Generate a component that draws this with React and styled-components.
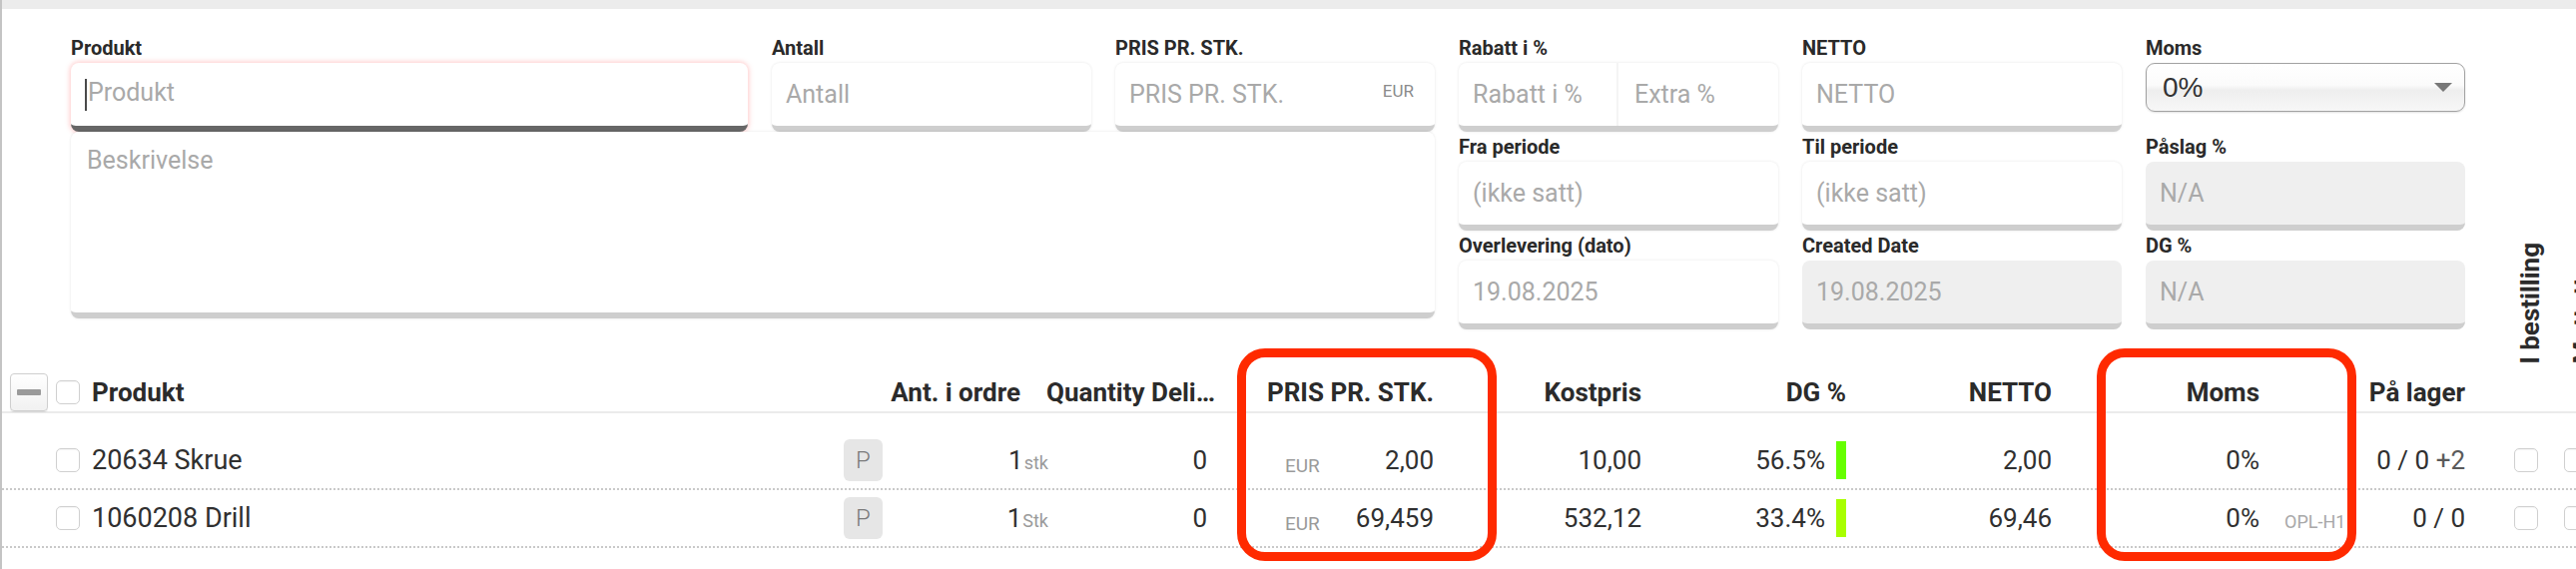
import React from "react";
import styled, { createGlobalStyle } from "styled-components";

const GlobalStyle = createGlobalStyle`
  * { box-sizing: border-box; }
  html, body { margin: 0; padding: 0; background: #fff; }
  body {
    width: 2580px;
    height: 570px;
    overflow: hidden;
    font-family: Roboto, "Liberation Sans", Arial, sans-serif;
    color: #2f2f2f;
  }
`;

const Page = styled.div`
  height: 570px;
  border-left: 2px solid #c4c4c4;
  overflow: hidden;
`;

const TopBar = styled.div`
  height: 9px;
  background: #ececec;
`;

/* ---------- form ---------- */

const FormGrid = styled.div`
  display: grid;
  grid-template-columns: 678px repeat(5, 320px);
  grid-template-rows: repeat(3, 99px);
  column-gap: 24px;
  padding: 24px 0 0 69px;
`;

const Field = styled.div`
  display: flex;
  flex-direction: column;
  grid-column: ${(p) => p.$col};
  grid-row: ${(p) => p.$row};
`;

const Label = styled.label`
  height: 30px;
  line-height: 30px;
  font-size: 20px;
  font-weight: 700;
  color: #2a2a2a;
  white-space: nowrap;
`;

const InputBox = styled.div`
  display: flex;
  align-items: center;
  justify-content: space-between;
  height: 69px;
  padding: 0 21px 0 14px;
  background: ${(p) => (p.$disabled ? "#efefef" : "#fff")};
  border-radius: 8px;
  border-bottom: 6px solid ${(p) => (p.$focused ? "#676767" : "#cecece")};
  box-shadow: ${(p) =>
    p.$focused
      ? "0 0 5px 1px rgba(255, 120, 120, 0.4)"
      : p.$disabled
      ? "none"
      : "0 0 3px rgba(0, 0, 0, 0.1)"};
  font-size: 25px;
  color: #a9a9a9;
  white-space: nowrap;
`;

const DescriptionBox = styled(InputBox)`
  grid-column: 1 / span 3;
  grid-row: 2 / span 2;
  align-items: flex-start;
  height: 187px;
  padding: 14px 16px;
`;

const SplitBox = styled(InputBox)`
  padding: 0;
  justify-content: flex-start;
`;

const SplitHalf = styled.span`
  flex: 1;
  height: 100%;
  display: flex;
  align-items: center;
  padding-left: 14px;

  & + & {
    border-left: 2px solid #f4f4f4;
    padding-left: 16px;
  }
`;

const Suffix = styled.span`
  margin-top: -8px;
  font-size: 17px;
  color: #8b8b8b;
`;

const Caret = styled.span`
  display: inline-block;
  width: 2px;
  height: 32px;
  margin-right: 1px;
  vertical-align: middle;
  background: #4a4a4a;
`;

const Select = styled.div`
  display: flex;
  align-items: center;
  justify-content: space-between;
  height: 49px;
  padding: 0 12px 0 16px;
  border: 1.5px solid #a2a2a2;
  border-radius: 9px;
  background: linear-gradient(
    to bottom,
    #ffffff 0%,
    #fbfbfb 45%,
    #eeeeee 56%,
    #f7f7f7 100%
  );
  box-shadow: 0 1px 2px rgba(0, 0, 0, 0.12);
  font-family: "Liberation Sans", Arial, sans-serif;
  font-size: 28px;
  color: #333;
`;

const SelectArrow = styled.span`
  width: 0;
  height: 0;
  border-left: 9px solid transparent;
  border-right: 9px solid transparent;
  border-top: 9px solid #787878;
`;

/* ---------- table ---------- */

const COLS =
  "46px 36px 753px 39px 138px 198px 216px 208px 205px 206px 208px 206px 79px 92px";

const Table = styled.div`
  position: relative;
  margin-top: 44px;
`;

const HeadRow = styled.div`
  display: grid;
  grid-template-columns: ${COLS};
  grid-template-rows: 38px;
  height: 40px;
  padding-left: 8px;
  border-bottom: 2px solid #ebebeb;
  font-size: 26px;
  font-weight: 700;
  color: #2b2b2b;
`;

const Body = styled.div`
  padding-top: 19px;
`;

const Row = styled.div`
  display: grid;
  grid-template-columns: ${COLS};
  height: 58px;
  padding-left: 8px;
  border-bottom: 2px dotted #c9c9c9;
  font-size: 26px;
  color: #303030;
`;

const justify = {
  left: "flex-start",
  right: "flex-end",
  center: "center",
  between: "space-between",
};

const Cell = styled.div`
  display: flex;
  align-items: center;
  justify-content: ${(p) => justify[p.$align || "right"]};
  gap: ${(p) => p.$gap || 0}px;
  padding-left: ${(p) => p.$pl || 0}px;
  padding-right: ${(p) => p.$pr || 0}px;
  min-width: 0;
  white-space: nowrap;
`;

const ProductName = styled.span`
  font-size: 27px;
`;

const HeadText = styled.span`
  overflow: hidden;
  text-overflow: ellipsis;
  white-space: nowrap;
`;

const VerticalCell = styled.div`
  display: flex;
  flex-direction: column;
  justify-content: flex-end;
  align-items: ${(p) => (p.$align === "left" ? "flex-start" : "flex-end")};
  padding-left: ${(p) => p.$pl || 0}px;
  padding-right: ${(p) => p.$pr || 0}px;
`;

const VerticalText = styled.span`
  writing-mode: vertical-rl;
  transform: rotate(180deg);
  margin-bottom: 47px;
  font-size: 26px;
  font-weight: 700;
  line-height: 26px;
  white-space: nowrap;
`;

const CollapseButton = styled.button`
  display: flex;
  align-items: center;
  justify-content: center;
  width: 38px;
  height: 38px;
  padding: 0;
  border: 1.5px solid #cfcfcf;
  border-radius: 4px;
  background: linear-gradient(to bottom, #ffffff, #f1f1f1);
  box-shadow: 0 1px 1px rgba(0, 0, 0, 0.08);
`;

const MinusBar = styled.span`
  width: 24px;
  height: 6px;
  border-radius: 1px;
  background: #9a9a9a;
`;

const Checkbox = styled.span`
  display: inline-block;
  width: 24px;
  height: 24px;
  border: 1.5px solid #d0d0d0;
  border-radius: 5px;
  background: #fff;
  box-shadow: inset 0 1px 1px rgba(0, 0, 0, 0.04);
`;

const Badge = styled.span`
  display: flex;
  align-items: center;
  justify-content: center;
  width: 39px;
  height: 42px;
  border-radius: 6px;
  background: #e6e6e6;
  color: #7a7a7a;
  font-size: 24px;
  font-weight: 300;
`;

const Unit = styled.span`
  margin-left: 1px;
  margin-right: -28px;
  font-size: 18px;
  color: #9a9a9a;
`;

const Currency = styled.span`
  margin-top: 10px;
  font-size: 19px;
  color: #9a9a9a;
`;

const Bar = styled.span`
  width: 10px;
  height: 38px;
  background: ${(p) => p.$color};
`;

const Code = styled.span`
  display: inline-block;
  width: 58px;
  margin-left: 25px;
  margin-right: -83px;
  overflow: hidden;
  vertical-align: -4px;
  line-height: 1;
  font-size: 18px;
  color: #a8a8a8;
`;

const Extra = styled.span`
  color: #5a5a5a;
`;

const Highlight = styled.div`
  position: absolute;
  top: -25px;
  left: ${(p) => p.$left}px;
  width: 260px;
  height: 213px;
  border: 9px solid #ff2a00;
  border-radius: 28px;
  pointer-events: none;
`;

const rows = [
  {
    name: "20634 Skrue",
    unit: "stk",
    price: "2,00",
    cost: "10,00",
    dg: "56.5%",
    dgColor: "#66ff00",
    netto: "2,00",
    code: null,
    extra: "+2",
  },
  {
    name: "1060208 Drill",
    unit: "Stk",
    price: "69,459",
    cost: "532,12",
    dg: "33.4%",
    dgColor: "#a8ff00",
    netto: "69,46",
    code: "OPL-H1",
    extra: null,
  },
];

const OrderLines = () => (
  <Table>
    <HeadRow>
      <Cell $align="left">
        <CollapseButton>
          <MinusBar />
        </CollapseButton>
      </Cell>
      <Cell $align="left">
        <Checkbox />
      </Cell>
      <Cell $align="left">Produkt</Cell>
      <Cell />
      <Cell>Ant. i ordre</Cell>
      <Cell $pl={26}>
        <HeadText>Quantity Delivered</HeadText>
      </Cell>
      <Cell>PRIS PR. STK.</Cell>
      <Cell>Kostpris</Cell>
      <Cell>DG %</Cell>
      <Cell>NETTO</Cell>
      <Cell>Moms</Cell>
      <Cell>På lager</Cell>
      <VerticalCell $pr={1}>
        <VerticalText>I bestilling</VerticalText>
      </VerticalCell>
      <VerticalCell $align="left" $pl={26}>
        <VerticalText>Mottatt</VerticalText>
      </VerticalCell>
    </HeadRow>
    <Body>
      {rows.map((r) => (
        <Row key={r.name}>
          <Cell />
          <Cell $align="left">
            <Checkbox />
          </Cell>
          <Cell $align="left">
            <ProductName>{r.name}</ProductName>
          </Cell>
          <Cell $align="left">
            <Badge>P</Badge>
          </Cell>
          <Cell>
            <span>
              1<Unit>{r.unit}</Unit>
            </span>
          </Cell>
          <Cell $pr={11}>0</Cell>
          <Cell $align="between" $pl={67}>
            <Currency>EUR</Currency>
            <span>{r.price}</span>
          </Cell>
          <Cell>{r.cost}</Cell>
          <Cell $gap={11}>
            <span>{r.dg}</span>
            <Bar $color={r.dgColor} />
          </Cell>
          <Cell>{r.netto}</Cell>
          <Cell>
            <span>
              0%{r.code && <Code>{r.code}</Code>}
            </span>
          </Cell>
          <Cell>
            <span>
              0 / 0{r.extra && <Extra> {r.extra}</Extra>}
            </span>
          </Cell>
          <Cell $pr={6}>
            <Checkbox />
          </Cell>
          <Cell $align="left" $pl={20}>
            <Checkbox />
          </Cell>
        </Row>
      ))}
    </Body>
    <Highlight $left={1237} />
    <Highlight $left={2098} />
  </Table>
);

const LineForm = () => (
  <FormGrid>
    <Field $col={1} $row={1}>
      <Label>Produkt</Label>
      <InputBox $focused>
        <span>
          <Caret />
          Produkt
        </span>
      </InputBox>
    </Field>
    <Field $col={2} $row={1}>
      <Label>Antall</Label>
      <InputBox>Antall</InputBox>
    </Field>
    <Field $col={3} $row={1}>
      <Label>PRIS PR. STK.</Label>
      <InputBox>
        <span>PRIS PR. STK.</span>
        <Suffix>EUR</Suffix>
      </InputBox>
    </Field>
    <Field $col={4} $row={1}>
      <Label>Rabatt i %</Label>
      <SplitBox>
        <SplitHalf>Rabatt i %</SplitHalf>
        <SplitHalf>Extra %</SplitHalf>
      </SplitBox>
    </Field>
    <Field $col={5} $row={1}>
      <Label>NETTO</Label>
      <InputBox>NETTO</InputBox>
    </Field>
    <Field $col={6} $row={1}>
      <Label>Moms</Label>
      <Select>
        <span>0%</span>
        <SelectArrow />
      </Select>
    </Field>

    <DescriptionBox>Beskrivelse</DescriptionBox>

    <Field $col={4} $row={2}>
      <Label>Fra periode</Label>
      <InputBox>(ikke satt)</InputBox>
    </Field>
    <Field $col={5} $row={2}>
      <Label>Til periode</Label>
      <InputBox>(ikke satt)</InputBox>
    </Field>
    <Field $col={6} $row={2}>
      <Label>Påslag %</Label>
      <InputBox $disabled>N/A</InputBox>
    </Field>

    <Field $col={4} $row={3}>
      <Label>Overlevering (dato)</Label>
      <InputBox>19.08.2025</InputBox>
    </Field>
    <Field $col={5} $row={3}>
      <Label>Created Date</Label>
      <InputBox $disabled>19.08.2025</InputBox>
    </Field>
    <Field $col={6} $row={3}>
      <Label>DG %</Label>
      <InputBox $disabled>N/A</InputBox>
    </Field>
  </FormGrid>
);

const App = () => (
  <>
    <GlobalStyle />
    <Page>
      <TopBar />
      <LineForm />
      <OrderLines />
    </Page>
  </>
);

export default App;
